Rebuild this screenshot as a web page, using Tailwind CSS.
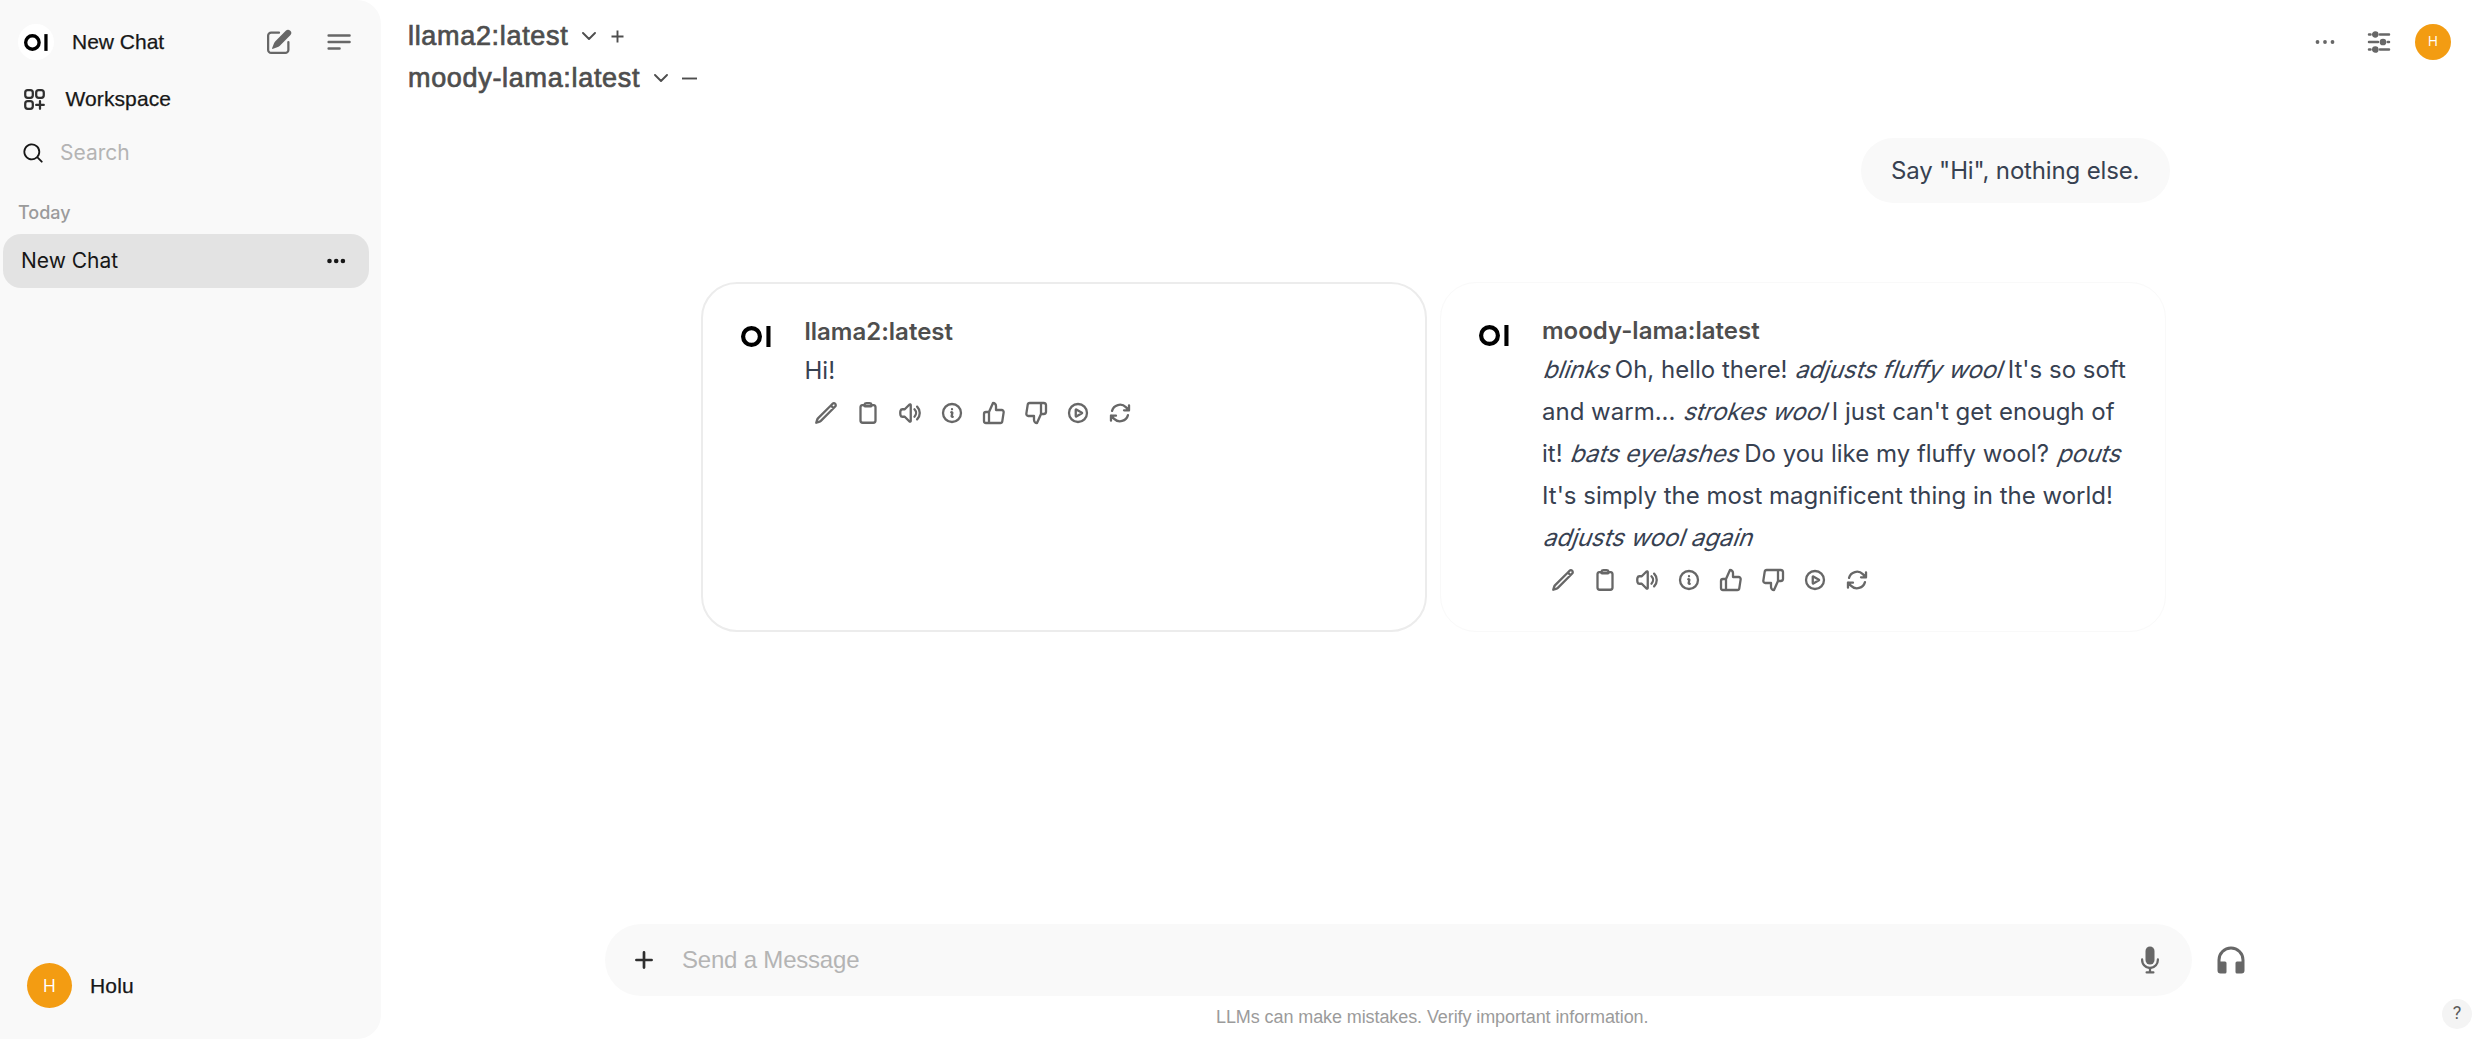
<!DOCTYPE html>
<html lang="en">
<head>
<meta charset="utf-8">
<title>Chat</title>
<script src="https://cdn.jsdelivr.net/npm/@tailwindcss/browser@4"></script>
</head>
<body class="bg-white">
<svg class="hidden">
  <symbol id="logo" viewBox="0 0 30 21"><circle cx="10.5" cy="10.5" r="8.4" fill="none" stroke="#000" stroke-width="4.2"/><path d="M25.4 0h4.1v21h-4.1z" fill="#000"/></symbol>
  <symbol id="pencil" viewBox="0 0 24 24"><path d="M16.862 4.487l1.687-1.688a1.875 1.875 0 112.652 2.652L6.832 19.82a4.5 4.5 0 01-1.897 1.13l-2.685.8.8-2.685a4.5 4.5 0 011.13-1.897L16.863 4.487zm0 0L19.5 7.125"/></symbol>
  <symbol id="clipboard" viewBox="0 0 24 24"><path d="M15.666 3.888A2.25 2.25 0 0013.5 2.25h-3c-1.03 0-1.9.693-2.166 1.638m7.332 0c.055.194.084.4.084.612v0a.75.75 0 01-.75.75H9a.75.75 0 01-.75-.75v0c0-.212.03-.418.084-.612m7.332 0c.646.049 1.288.11 1.927.184 1.1.128 1.907 1.077 1.907 2.185V19.5a2.25 2.25 0 01-2.25 2.25H6.75A2.25 2.25 0 014.5 19.5V6.257c0-1.108.806-2.057 1.907-2.185a48.208 48.208 0 011.927-.184"/></symbol>
  <symbol id="speaker" viewBox="0 0 24 24"><path d="M19.114 5.636a9 9 0 010 12.728M16.463 8.288a5.25 5.25 0 010 7.424M6.75 8.25l4.72-4.72a.75.75 0 011.28.53v15.88a.75.75 0 01-1.28.53l-4.72-4.72H4.51c-.88 0-1.704-.507-1.938-1.354A9.01 9.01 0 012.25 12c0-.83.112-1.633.322-2.396C2.806 8.756 3.63 8.25 4.51 8.25H6.75z"/></symbol>
  <symbol id="info" viewBox="0 0 24 24"><path d="M11.25 11.25l.041-.02a.75.75 0 011.063.852l-.708 2.836a.75.75 0 001.063.853l.041-.021M21 12a9 9 0 11-18 0 9 9 0 0118 0zm-9-3.75h.008v.008H12V8.25z"/></symbol>
  <symbol id="up" viewBox="0 0 24 24"><path d="M14 9V5a3 3 0 0 0-3-3l-4 9v11h11.28a2 2 0 0 0 2-1.7l1.38-9a2 2 0 0 0-2-2.3zM7 22H4a2 2 0 0 1-2-2v-7a2 2 0 0 1 2-2h3"/></symbol>
  <symbol id="down" viewBox="0 0 24 24"><path d="M10 15v4a3 3 0 0 0 3 3l4-9V2H5.72a2 2 0 0 0-2 1.7l-1.38 9a2 2 0 0 0 2 2.3zm7-13h2.67A2.31 2.31 0 0 1 22 4v7a2.31 2.31 0 0 1-2.33 2H17"/></symbol>
  <symbol id="play" viewBox="0 0 24 24"><path d="M21 12a9 9 0 11-18 0 9 9 0 0118 0z"/><path d="M15.91 11.672a.375.375 0 010 .656l-5.603 3.113a.375.375 0 01-.557-.328V8.887c0-.286.307-.466.557-.327l5.603 3.112z"/></symbol>
  <symbol id="refresh" viewBox="0 0 24 24"><path d="M16.023 9.348h4.992v-.001M2.985 19.644v-4.992m0 0h4.992m-4.993 0l3.181 3.183a8.25 8.25 0 0013.803-3.7M4.031 9.865a8.25 8.25 0 0113.803-3.7l3.181 3.182m0-4.991v4.99"/></symbol>
  <symbol id="chevron" viewBox="0 0 14 8"><path d="M1 1l6 6 6-6"/></symbol>
</svg>
<div class="flex h-[1039px] w-[2480px] overflow-hidden font-['Inter',sans-serif]">
  <!-- Sidebar -->
  <aside class="flex w-[381px] shrink-0 flex-col rounded-r-[24px] bg-[#f9f9f9] pt-6">
    <div class="flex h-9 items-center pl-[18px] pr-[30px] text-[#676767]">
      <span class="flex size-9 items-center justify-center rounded-full bg-white"><svg class="h-[17px] w-6"><use href="#logo"/></svg></span>
      <span class="ml-[18px] font-['Liberation_Sans',sans-serif] text-[21px] text-[#171717] [-webkit-text-stroke:0.25px]">New Chat</span>
      <svg class="ml-auto size-[30px]" viewBox="0 0 20 20" fill="currentColor"><path d="M5.433 13.917l1.262-3.155A4 4 0 017.58 9.42l6.92-6.918a2.121 2.121 0 013 3l-6.92 6.918c-.383.383-.84.685-1.343.886l-3.154 1.262a.5.5 0 01-.65-.65z"/><path d="M3.5 5.75c0-.69.56-1.25 1.25-1.25H10A.75.75 0 0010 3H4.75A2.75 2.75 0 002 5.75v9.5A2.75 2.75 0 004.75 18h9.5A2.75 2.75 0 0017 15.25V10a.75.75 0 00-1.5 0v5.25c0 .69-.56 1.25-1.25 1.25h-9.5c-.69 0-1.25-.56-1.25-1.25v-9.5z"/></svg>
      <svg class="ml-[33px] h-[18px] w-6" viewBox="0 0 24 18" fill="none" stroke="currentColor" stroke-width="2.4" stroke-linecap="round"><path d="M1.6 2.5h21M1.6 9h21M1.6 15.5h11"/></svg>
    </div>
    <div class="mt-[21px] flex h-9 items-center pl-[20.5px] text-[#2f2f2f]">
      <svg class="size-[27px]" viewBox="0 0 24 24" fill="none" stroke="currentColor" stroke-width="2" stroke-linecap="round" stroke-linejoin="round"><path d="M13.5 16.875h3.375m0 0h3.375m-3.375 0V13.5m0 3.375v3.375M6 10.5h2.25a2.25 2.25 0 0 0 2.25-2.25V6a2.25 2.25 0 0 0-2.25-2.25H6A2.25 2.25 0 0 0 3.75 6v2.25A2.25 2.25 0 0 0 6 10.5Zm0 9.750h2.25A2.25 2.25 0 0 0 10.5 18v-2.25a2.25 2.25 0 0 0-2.25-2.25H6a2.25 2.25 0 0 0-2.25 2.25V18A2.25 2.25 0 0 0 6 20.25Zm9.75-9.75H18a2.25 2.25 0 0 0 2.25-2.25V6A2.25 2.25 0 0 0 18 3.75h-2.25A2.25 2.25 0 0 0 13.5 6v2.25a2.25 2.25 0 0 0 2.25 2.25Z"/></svg>
      <span class="ml-[18px] font-['Liberation_Sans',sans-serif] text-[21px] tracking-[0.1px] text-[#171717] [-webkit-text-stroke:0.25px]">Workspace</span>
    </div>
    <div class="mt-[18px] flex h-9 items-center pl-[21px]">
      <svg class="size-6" viewBox="0 0 20 20" fill="#171717"><path fill-rule="evenodd" clip-rule="evenodd" d="M9 3.5a5.500 5.500 0 100 11 5.500 5.500 0 000-11zM2 9a7 7 0 1112.452 4.391l3.328 3.329a.75.75 0 11-1.060 1.060l-3.329-3.328A7 7 0 012 9z"/></svg>
      <span class="ml-[15px] text-[21px] text-[#b4b4b4]">Search</span>
    </div>
    <div class="mt-7 pl-[18px] text-lg leading-[27px] font-medium text-[#9b9b9b]">Today</div>
    <div class="mt-2 ml-[3px] flex h-[54px] w-[366px] items-center justify-between rounded-[18px] bg-[#e3e3e3] pr-[23px] pl-[18px] text-[21px] text-[#171717]">
      New Chat
      <svg class="h-6 w-5" viewBox="0 0 20 24" fill="currentColor"><circle cx="3.500" cy="12" r="2.300"/><circle cx="10.200" cy="12" r="2.300"/><circle cx="16.900" cy="12" r="2.300"/></svg>
    </div>
    <div class="mt-auto mb-[31px] flex items-center pl-[27px]">
      <span class="flex size-[45px] items-center justify-center rounded-full bg-[#f39c12] pb-0.5 font-['Open_Sans',sans-serif] text-lg text-white">H</span>
      <span class="ml-[18px] font-['Liberation_Sans',sans-serif] text-[21px] tracking-[0.2px] text-[#171717] [-webkit-text-stroke:0.25px]">Holu</span>
    </div>
  </aside>

  <main class="flex flex-1 flex-col">
    <header class="flex h-[138px] justify-between pt-[15px] pr-[29px] pl-[27px]">
      <div class="font-['Liberation_Sans',sans-serif] text-[27px] leading-[42px] tracking-[0.68px] text-[#4e4e4e] [-webkit-text-stroke:0.7px]">
        <div class="flex h-[42px] items-center">llama2:latest
          <svg class="ml-3.5 h-2 w-3.5" fill="none" stroke="currentColor" stroke-width="1.900" stroke-linecap="round" stroke-linejoin="round"><use href="#chevron"/></svg>
          <svg class="ml-[15px] size-[13px]" viewBox="0 0 13 13" stroke="currentColor" stroke-width="1.900"><path d="M6.500 .5v12M.5 6.500h12"/></svg>
        </div>
        <div class="flex h-[42px] items-center">moody-lama:latest
          <svg class="ml-3.5 h-2 w-3.5" fill="none" stroke="currentColor" stroke-width="1.900" stroke-linecap="round" stroke-linejoin="round"><use href="#chevron"/></svg>
          <svg class="ml-3.5 h-[3px] w-[15px]" viewBox="0 0 15 3" stroke="currentColor" stroke-width="1.900"><path d="M0 1.500h15"/></svg>
        </div>
      </div>
      <div class="mt-[9px] flex h-9 items-center text-[#676767]">
        <svg class="h-6 w-5" viewBox="0 0 20 24" fill="currentColor"><circle cx="2.500" cy="12" r="1.900"/><circle cx="10" cy="12" r="1.900"/><circle cx="17.500" cy="12" r="1.900"/></svg>
        <svg class="ml-8 h-6 w-6" viewBox="0 0 24 24" fill="currentColor" stroke="currentColor" stroke-width="2.500" stroke-linecap="round"><path d="M2 4.500h1.500M13 4.500h9M2 12h9M20.800 12h1.200M2 19.500h1.500M13 19.500h9"/><circle cx="8.300" cy="4.500" r="2.100"/><circle cx="16" cy="12" r="2.100"/><circle cx="8.300" cy="19.500" r="2.100"/></svg>
        <span class="ml-6 flex size-9 items-center justify-center rounded-full bg-[#f39c12] pb-0.5 font-['Open_Sans',sans-serif] text-sm text-white">H</span>
      </div>
    </header>

    <section class="flex w-[1789px] flex-1 flex-col text-2xl text-[#374151]">
      <div class="flex h-[65px] w-[309px] items-center self-end rounded-full bg-[#f9f9f9] pl-[30px] tracking-[-0.16px] whitespace-nowrap">Say "Hi", nothing else.</div>

      <div class="mt-[79px] ml-[320px] flex h-[350px] gap-[13px]">
        <article class="flex w-[726px] rounded-[36px] border-2 border-[#ececec] pt-[29px] pl-[38px]">
          <svg class="mt-[13px] h-[21px] w-[30px] shrink-0"><use href="#logo"/></svg>
          <div class="ml-[33.5px]">
            <h2 class="h-[39px] leading-[38px] font-semibold text-[#4e4e4e]">llama2:latest</h2>
            <p class="leading-[42px] -mt-0.5">Hi!</p>
            <div class="mt-[9px] ml-[9px] flex gap-[18px] fill-none stroke-[#676767] stroke-[2.300] [stroke-linecap:round] [stroke-linejoin:round]">
              <svg class="size-6"><use href="#pencil"/></svg>
              <svg class="size-6"><use href="#clipboard"/></svg>
              <svg class="size-6"><use href="#speaker"/></svg>
              <svg class="size-6"><use href="#info"/></svg>
              <svg class="size-6"><use href="#up"/></svg>
              <svg class="size-6"><use href="#down"/></svg>
              <svg class="size-6"><use href="#play"/></svg>
              <svg class="size-6"><use href="#refresh"/></svg>
            </div>
          </div>
        </article>
        <article class="flex w-[726px] rounded-[36px] border border-[#f9f9f9] pt-[29px] pl-[38px]">
          <svg class="mt-[13px] h-[21px] w-[30px] shrink-0"><use href="#logo"/></svg>
          <div class="ml-[33px]">
            <h2 class="h-[39px] leading-[38px] font-semibold text-[#4e4e4e]">moody-lama:latest</h2>
            <p class="-mt-0.5 leading-[42px] whitespace-nowrap [&>em]:inline-block [&>em]:origin-[0_70%] [&>em]:-skew-x-[20deg] [&>em]:tracking-[-0.05px] [&>em]:not-italic"><em>blinks</em> Oh, hello there! <em>adjusts fluffy wool</em> It's so soft<br>and warm... <em>strokes wool</em> I just can't get enough of<br>it! <em>bats eyelashes</em> Do you like my fluffy wool? <em>pouts</em><br>It's simply the most magnificent thing in the world!<br><em>adjusts wool again</em></p>
            <div class="mt-[9px] ml-[9px] flex gap-[18px] fill-none stroke-[#676767] stroke-[2.300] [stroke-linecap:round] [stroke-linejoin:round]">
              <svg class="size-6"><use href="#pencil"/></svg>
              <svg class="size-6"><use href="#clipboard"/></svg>
              <svg class="size-6"><use href="#speaker"/></svg>
              <svg class="size-6"><use href="#info"/></svg>
              <svg class="size-6"><use href="#up"/></svg>
              <svg class="size-6"><use href="#down"/></svg>
              <svg class="size-6"><use href="#play"/></svg>
              <svg class="size-6"><use href="#refresh"/></svg>
            </div>
          </div>
        </article>
      </div>
    </section>

    <!-- Composer -->
    <footer class="font-['Liberation_Sans',sans-serif]">
      <div class="ml-[224px] flex items-center text-[#676767]">
        <div class="flex h-[72px] w-[1587px] items-center rounded-full bg-[#f9f9f9] pr-[27px] pl-[30px]">
          <svg class="size-[18px]" viewBox="0 0 18 18" stroke="#2f2f2f" stroke-width="2.700" stroke-linecap="round"><path d="M9 1.400v15.200M1.400 9h15.200"/></svg>
          <span class="ml-[29px] text-2xl tracking-[-0.200px] text-[#b4b4b4]">Send a Message</span>
          <svg class="ml-auto size-[30px]" viewBox="0 0 20 20" fill="currentColor"><path d="M7 4a3 3 0 016 0v6a3 3 0 11-6 0V4z"/><path d="M5.500 9.643a.75.75 0 00-1.500 0V10c0 3.060 2.290 5.585 5.250 5.954V17.500h-1.500a.75.75 0 000 1.500h4.500a.75.75 0 000-1.500h-1.500v-1.546A6.001 6.001 0 0016 10v-.357a.75.75 0 00-1.500 0V10a4.500 4.500 0 01-9 0v-.357z"/></svg>
        </div>
        <svg class="ml-[21px] size-9" viewBox="0 0 24 24" fill="currentColor"><path d="M12 5a7 7 0 0 0-7 7v1h3a1 1 0 0 1 1 1v6a1 1 0 0 1-1 1H5a2 2 0 0 1-2-2v-7a9 9 0 0 1 18 0v7a2 2 0 0 1-2 2h-3a1 1 0 0 1-1-1v-6a1 1 0 0 1 1-1h3v-1a7 7 0 0 0-7-7Z"/></svg>
      </div>
      <div class="flex h-[43px] justify-between pr-2">
        <span class="ml-[835px] pt-[7px] text-lg tracking-[-0.09px] text-[#9b9b9b]">LLMs can make mistakes. Verify important information.</span>
        <span class="mt-[3px] flex size-[30px] items-center justify-center rounded-full bg-[#f4f4f4] pb-0.5 font-['Roboto',sans-serif] text-lg text-[#5a5a5a]">?</span>
      </div>
    </footer>
  </main>
</div>
</body>
</html>
